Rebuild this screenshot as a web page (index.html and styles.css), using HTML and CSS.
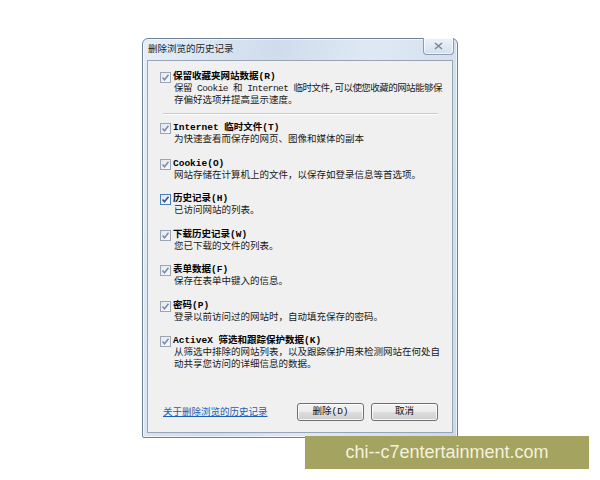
FILE: index.html
```html
<!DOCTYPE html>
<html lang="zh-CN">
<head>
    <meta charset="UTF-8">
    <title>删除浏览的历史记录</title>
    <link rel="stylesheet" href="styles.css">
</head>
<body>
    <div class="window">
        <div class="titlebar">
            <span class="title">删除浏览的历史记录</span>
            <button class="close-btn">
                <svg width="9" height="8" viewBox="0 0 9 8">
                    <path d="M1 1 L8 7 M8 1 L1 7" stroke="#7a8899" stroke-width="1.6" fill="none"/>
                </svg>
            </button>
        </div>

        <div class="panel">
            <div class="option">
                <span class="check"><svg width="9" height="9" viewBox="0 0 9 9"><path d="M1.5 4.5 L3.5 6.8 L7.5 1.8" stroke="#7b8aa8" stroke-width="1.5" fill="none"/></svg></span>
                <div class="option-text">
                    <div class="option-title">保留收藏夹网站数据(R)</div>
                    <div class="option-desc"><span class="tight">保留 Cookie 和 Internet 临时文件,可以使您收藏的网站能够保</span><br>存偏好选项并提高显示速度。</div>
                </div>
            </div>

            <hr class="separator">

            <div class="option-list">
                <div class="option">
                    <span class="check"><svg width="9" height="9" viewBox="0 0 9 9"><path d="M1.5 4.5 L3.5 6.8 L7.5 1.8" stroke="#7b8aa8" stroke-width="1.5" fill="none"/></svg></span>
                    <div class="option-text">
                        <div class="option-title">Internet 临时文件(T)</div>
                        <div class="option-desc">为快速查看而保存的网页、图像和媒体的副本</div>
                    </div>
                </div>
                <div class="option">
                    <span class="check"><svg width="9" height="9" viewBox="0 0 9 9"><path d="M1.5 4.5 L3.5 6.8 L7.5 1.8" stroke="#7b8aa8" stroke-width="1.5" fill="none"/></svg></span>
                    <div class="option-text">
                        <div class="option-title">Cookie(O)</div>
                        <div class="option-desc">网站存储在计算机上的文件，以保存如登录信息等首选项。</div>
                    </div>
                </div>
                <div class="option">
                    <span class="check active"><svg width="9" height="9" viewBox="0 0 9 9"><path d="M1.5 4.5 L3.5 6.8 L7.5 1.8" stroke="#3b4f8c" stroke-width="1.6" fill="none"/></svg></span>
                    <div class="option-text">
                        <div class="option-title">历史记录(H)</div>
                        <div class="option-desc">已访问网站的列表。</div>
                    </div>
                </div>
                <div class="option">
                    <span class="check"><svg width="9" height="9" viewBox="0 0 9 9"><path d="M1.5 4.5 L3.5 6.8 L7.5 1.8" stroke="#7b8aa8" stroke-width="1.5" fill="none"/></svg></span>
                    <div class="option-text">
                        <div class="option-title">下载历史记录(W)</div>
                        <div class="option-desc">您已下载的文件的列表。</div>
                    </div>
                </div>
                <div class="option">
                    <span class="check"><svg width="9" height="9" viewBox="0 0 9 9"><path d="M1.5 4.5 L3.5 6.8 L7.5 1.8" stroke="#7b8aa8" stroke-width="1.5" fill="none"/></svg></span>
                    <div class="option-text">
                        <div class="option-title">表单数据(F)</div>
                        <div class="option-desc">保存在表单中键入的信息。</div>
                    </div>
                </div>
                <div class="option">
                    <span class="check"><svg width="9" height="9" viewBox="0 0 9 9"><path d="M1.5 4.5 L3.5 6.8 L7.5 1.8" stroke="#7b8aa8" stroke-width="1.5" fill="none"/></svg></span>
                    <div class="option-text">
                        <div class="option-title">密码(P)</div>
                        <div class="option-desc">登录以前访问过的网站时，自动填充保存的密码。</div>
                    </div>
                </div>
                <div class="option">
                    <span class="check"><svg width="9" height="9" viewBox="0 0 9 9"><path d="M1.5 4.5 L3.5 6.8 L7.5 1.8" stroke="#7b8aa8" stroke-width="1.5" fill="none"/></svg></span>
                    <div class="option-text">
                        <div class="option-title">ActiveX 筛选和跟踪保护数据(K)</div>
                        <div class="option-desc">从筛选中排除的网站列表，以及跟踪保护用来检测网站在何处自<br>动共享您访问的详细信息的数据。</div>
                    </div>
                </div>
            </div>

            <div class="footer">
                <a href="#" class="help-link">关于删除浏览的历史记录</a>
                <div class="actions">
                    <button class="btn">删除(D)</button>
                    <button class="btn">取消</button>
                </div>
            </div>
        </div>
    </div>

    <div class="watermark">chi--c7entertainment.com</div>
</body>
</html>
```

FILE: styles.css
```css
* {
    margin: 0;
    padding: 0;
    box-sizing: border-box;
}

body {
    font-family: "Liberation Mono", "Noto Sans CJK SC", monospace;
    font-size: 9.5px;
    line-height: 12px;
    color: #111;
    background: #fff;
    padding: 38px 0 0 142px;
    width: 600px;
    height: 480px;
    position: relative;
}

.window {
    width: 316px;
    height: 400px;
    border: 1px solid #6f8196;
    border-radius: 6px 6px 2px 2px;
    background: linear-gradient(100deg, #e6eef7 0%, #cfdcec 35%, #dfe9f4 60%, #cbd9ea 100%);
    box-shadow: inset 0 0 0 1px rgba(255,255,255,0.6);
    padding: 0 4px 4px 4px;
    display: flex;
    flex-direction: column;
}

.titlebar {
    height: 21px;
    display: flex;
    align-items: flex-start;
    justify-content: space-between;
}

.title {
    font-size: 9.5px;
    line-height: 12px;
    margin: 5px 0 0 1px;
    color: #222;
}

.close-btn {
    width: 31px;
    height: 17px;
    margin-top: -1px;
    margin-right: -1px;
    border: 1px solid #8b9bb0;
    border-top: none;
    border-radius: 0 0 4px 4px;
    background: linear-gradient(#eef3f9, #d4dfec);
    box-shadow: inset 0 0 0 1px rgba(255,255,255,0.7);
    display: flex;
    align-items: center;
    justify-content: center;
}

.panel {
    flex: 1;
    background: #f0f0f0;
    border: 1px solid #97a5b6;
    padding: 10px 14px 11px 12px;
    display: flex;
    flex-direction: column;
}

.option {
    display: flex;
    align-items: flex-start;
    gap: 2px;
    white-space: nowrap;
}

.check {
    width: 11px;
    height: 11px;
    margin-top: 1px;
    flex-shrink: 0;
    border: 1px solid #9aa6b4;
    background: linear-gradient(135deg, #e4e8ee, #f8f9fb);
    display: flex;
    align-items: center;
    justify-content: center;
}

.check.active {
    border-color: #4d7fb8;
    background: linear-gradient(135deg, #dbe8f6, #f7fbff);
}

.option-title {
    font-weight: bold;
    color: #000;
}

.option-desc {
    padding-left: 1px;
    color: #1a1a1a;
}

.tight {
    letter-spacing: -0.55px;
}

.separator {
    border: none;
    border-top: 1px solid #c9c9c9;
    border-bottom: 1px solid #fff;
    margin: 6px 0 7px 3px;
}

.option-list {
    display: flex;
    flex-direction: column;
    gap: 11.5px;
}

.footer {
    margin-top: auto;
    padding-left: 3px;
    display: flex;
    align-items: center;
    justify-content: space-between;
}

.help-link {
    color: #1a5fb4;
    text-decoration: underline;
    margin-top: 1px;
}

.actions {
    display: flex;
    gap: 7px;
}

.btn {
    width: 67px;
    height: 18px;
    font-family: inherit;
    font-size: 9.5px;
    line-height: 12px;
    color: #111;
    border: 1px solid #707070;
    border-radius: 3px;
    background: linear-gradient(#f3f3f3 0%, #ebebeb 50%, #dddddd 51%, #cfcfcf 100%);
    box-shadow: inset 0 0 0 1px rgba(255,255,255,0.8);
}

.watermark {
    position: absolute;
    left: 305px;
    top: 436px;
    width: 284px;
    height: 33px;
    background: #a4a35f;
    color: #f4f2dc;
    font-family: "Liberation Sans", Arial, sans-serif;
    font-size: 18px;
    line-height: 33px;
    text-align: center;
}
```
